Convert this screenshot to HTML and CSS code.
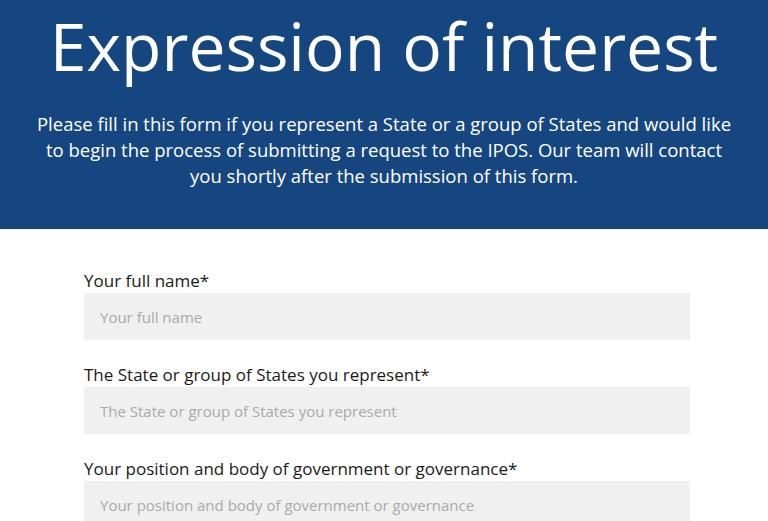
FILE: index.html
```html
<!DOCTYPE html>
<html>
<head>
    <meta charset="utf-8">
    <title>Expression of interest</title>
    <link rel="stylesheet" href="styles.css">
</head>
<body>
<div class="hero">
    <h1>Expression of interest</h1>
    <p>Please fill in this form if you represent a State or a group of States and would like to begin the process of submitting a request to the IPOS. Our team will contact you shortly after the submission of this form.</p>
</div>
<form class="eoi-form">
    <div class="field">
        <label for="name">Your full name*</label>
        <input type="text" id="name" placeholder="Your full name">
    </div>
    <div class="field">
        <label for="state">The State or group of States you represent*</label>
        <input type="text" id="state" placeholder="The State or group of States you represent">
    </div>
    <div class="field">
        <label for="position">Your position and body of government or governance*</label>
        <input type="text" id="position" placeholder="Your position and body of government or governance">
    </div>
</form>
</body>
</html>
```

FILE: styles.css
```css
* {
    margin: 0;
    padding: 0;
    box-sizing: border-box;
}
body {
    font-family: "Open Sans", "Liberation Sans", sans-serif;
    color: #1a1a1a;
    background: #fff;
}
/* blue header band */
.hero {
    height: 229px;
    background: #164680;
    color: #fff;
    text-align: center;
    padding: 6px 20px 0;
}
.hero h1 {
    font-size: 66px;
    font-weight: 400;
    line-height: 78px;
}
.hero p {
    max-width: 702px;
    margin: 27px auto 0;
    font-size: 18.5px;
    line-height: 26px;
}
/* form */
.eoi-form {
    width: 606px;
    margin: 0 0 0 84px;
    padding-top: 40px;
}
.field {
    margin-bottom: 23px;
}
.field label {
    display: block;
    font-size: 17px;
    line-height: 24px;
}
.field input {
    display: block;
    width: 100%;
    height: 47px;
    border: none;
    background: #f0f0f0;
    padding: 0 16px;
    font-family: inherit;
    font-size: 15px;
    color: #333;
}
.field input::placeholder {
    color: #aaa;
}
```
